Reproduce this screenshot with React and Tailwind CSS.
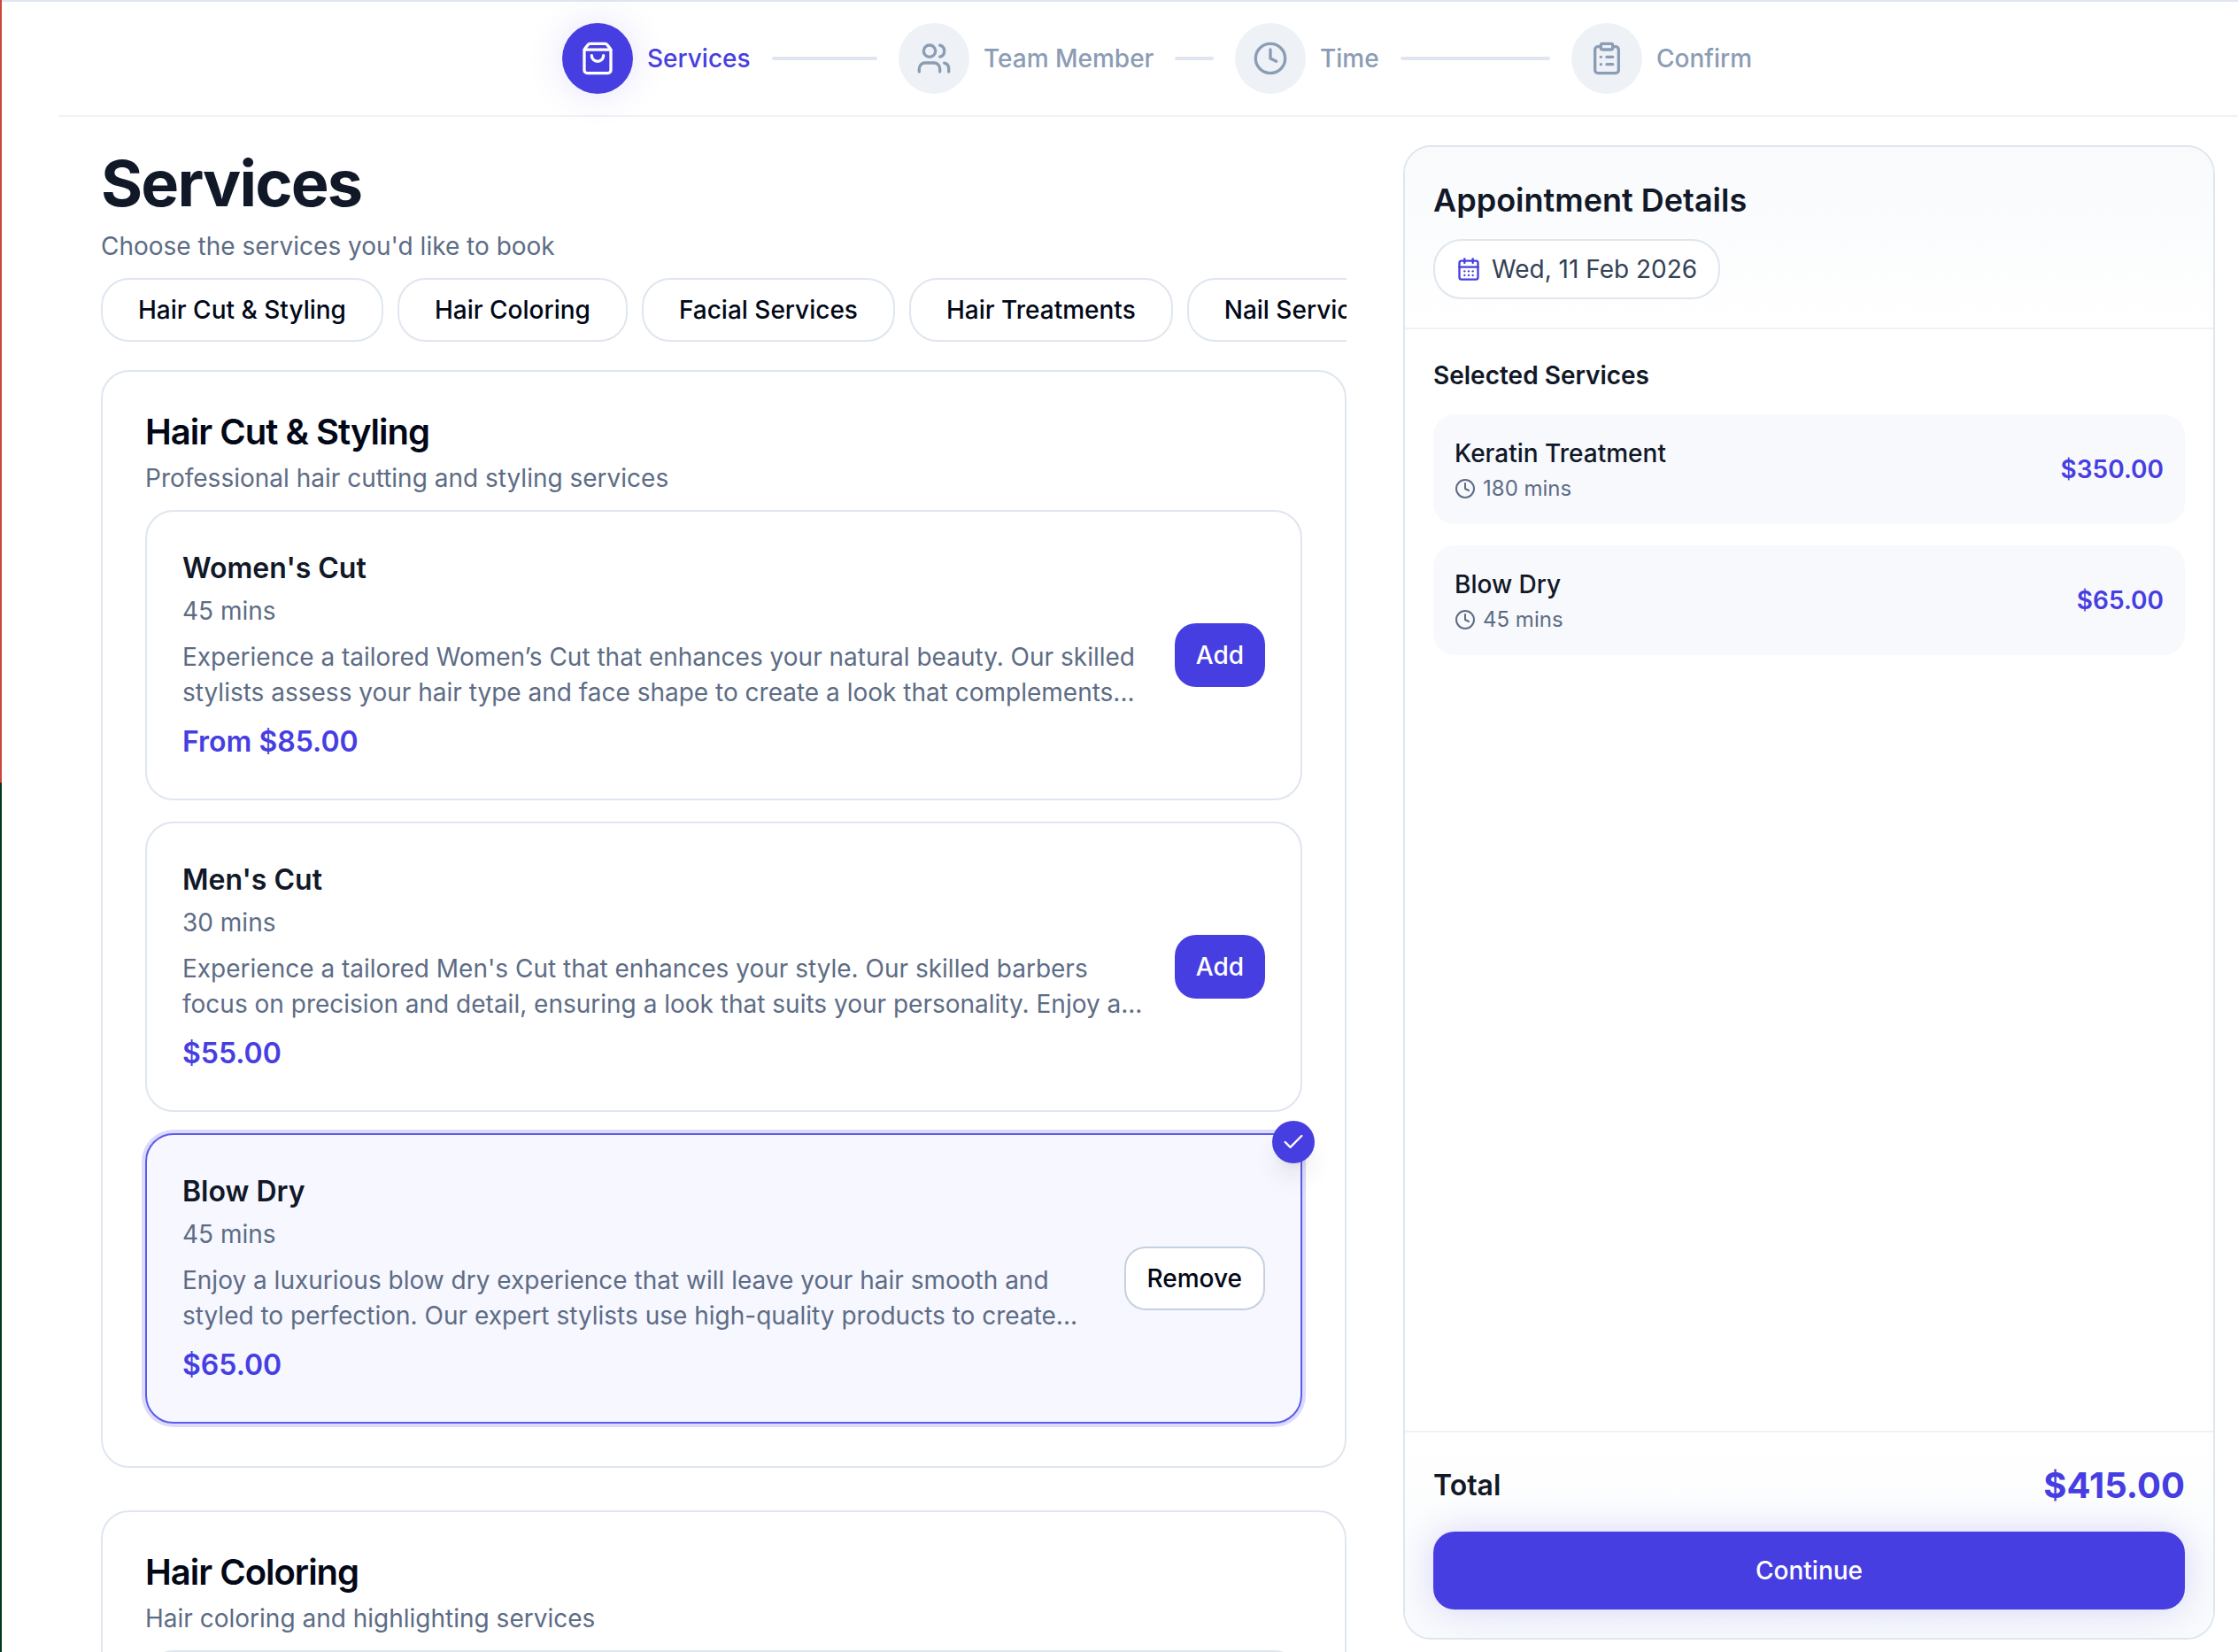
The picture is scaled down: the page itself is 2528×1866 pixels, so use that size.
import React, { useState } from "react";
import {
  CalendarDays,
  Check,
  ClipboardList,
  Clock,
  ShoppingBag,
  Users,
} from "lucide-react";

// Booking steps
const steps = [
  { id: "services", label: "Services", icon: ShoppingBag },
  { id: "team", label: "Team Member", icon: Users },
  { id: "time", label: "Time", icon: Clock },
  { id: "confirm", label: "Confirm", icon: ClipboardList },
];

const tabs = [
  "Hair Cut & Styling",
  "Hair Coloring",
  "Facial Services",
  "Hair Treatments",
  "Nail Services",
];

// Service catalog
const categories = [
  {
    id: 1,
    name: "Hair Cut & Styling",
    description: "Professional hair cutting and styling services",
    services: [
      {
        id: 11,
        name: "Women's Cut",
        duration: 45,
        price: "From $85.00",
        amount: 85,
        description:
          "Experience a tailored Women’s Cut that enhances your natural beauty. Our skilled stylists assess your hair type and face shape to create a look that complements...",
      },
      {
        id: 12,
        name: "Men's Cut",
        duration: 30,
        price: "$55.00",
        amount: 55,
        description:
          "Experience a tailored Men's Cut that enhances your style. Our skilled barbers focus on precision and detail, ensuring a look that suits your personality. Enjoy a...",
      },
      {
        id: 13,
        name: "Blow Dry",
        duration: 45,
        price: "$65.00",
        amount: 65,
        description:
          "Enjoy a luxurious blow dry experience that will leave your hair smooth and styled to perfection. Our expert stylists use high-quality products to create...",
      },
    ],
  },
  {
    id: 2,
    name: "Hair Coloring",
    description: "Hair coloring and highlighting services",
    services: [
      {
        id: 21,
        name: "Full Color",
        duration: 120,
        price: "From $140.00",
        amount: 140,
        description: "All-over color matched to your skin tone.",
      },
    ],
  },
];

function Stepper({ current }) {
  return (
    <header className="ml-16 shrink-0 border-b-2 border-[#eef2f7]">
      <ol className="flex justify-center py-6 pl-5">
        {steps.map((step, index) => {
          const Icon = step.icon;
          const active = step.id === current;
          const last = index === steps.length - 1;
          return (
            <li
              key={step.id}
              className={`flex items-center ${last ? "" : "w-[380px]"}`}
            >
              <span
                className={`flex size-20 shrink-0 items-center justify-center rounded-full ${
                  active
                    ? "bg-[#473ee2] text-white shadow-[0_0_40px_rgba(71,62,226,0.15)]"
                    : "bg-[#eef2f7] text-[#8b9cb5]"
                }`}
              >
                <Icon className="size-10" />
              </span>
              <span
                className={`ml-4 text-[28px] leading-10 font-medium whitespace-nowrap ${
                  active ? "text-[#473ee2]" : "text-[#8b9cb5]"
                }`}
              >
                {step.label}
              </span>
              {!last && (
                <span className="mx-6 h-1 flex-1 rounded-full bg-[#dfe6ef]" />
              )}
            </li>
          );
        })}
      </ol>
    </header>
  );
}

function ServiceCard({ service, selected, onToggle }) {
  return (
    <article
      className={`relative flex items-center gap-8 rounded-[32px] border-2 p-10 ${
        selected
          ? "border-[#5b5cec] bg-[#f6f7ff] ring-4 ring-[#dddafb]"
          : "border-[#dfe6ef] bg-white"
      }`}
    >
      {selected && (
        <span className="absolute -top-4 -right-4 flex size-12 items-center justify-center rounded-full bg-[#473ee2] text-white shadow-[0_20px_30px_-6px_rgba(0,0,0,0.1),0_8px_12px_-8px_rgba(0,0,0,0.1)]">
          <Check className="size-7" />
        </span>
      )}

      <div className="min-w-0 flex-1">
        <h3 className="text-[32px] leading-12 font-semibold text-[#111827]">
          {service.name}
        </h3>
        <p className="mt-1 text-[28px] leading-10 text-[#5d6c85]">
          {service.duration} mins
        </p>
        <p className="mt-3 line-clamp-2 text-[28px] leading-10 text-[#5d6c85]">
          {service.description}
        </p>
        <p className="mt-3 text-[32px] leading-12 font-semibold text-[#473ee2]">
          {service.price}
        </p>
      </div>

      {selected ? (
        <button
          type="button"
          onClick={onToggle}
          className="h-[72px] shrink-0 rounded-3xl border-2 border-[#c5d1e0] bg-white px-6 text-[28px] font-medium text-[#020817]"
        >
          Remove
        </button>
      ) : (
        <button
          type="button"
          onClick={onToggle}
          className="h-[72px] shrink-0 rounded-3xl bg-[#473ee2] px-6 text-[28px] font-medium text-white"
        >
          Add
        </button>
      )}
    </article>
  );
}

function AppointmentDetails({ items }) {
  const total = items.reduce((sum, item) => sum + item.amount, 0);

  return (
    <aside className="flex w-[38.4%] shrink-0 flex-col overflow-hidden rounded-[32px] border-2 border-[#dfe6ef] bg-white">
      <div className="border-b-2 border-[#eef2f7] bg-linear-to-b from-[#f8fafc] to-white p-8">
        <h2 className="text-4xl leading-14 font-semibold text-[#111827]">
          Appointment Details
        </h2>
        <div className="mt-4 inline-flex items-center gap-3 rounded-[32px] border-2 border-[#dfe6ef] bg-white px-6 py-3 align-top text-[28px] leading-10 text-[#334155]">
          <CalendarDays className="size-7 text-[#473ee2]" />
          Wed, 11 Feb 2026
        </div>
      </div>

      <div className="flex-1 p-8">
        <h3 className="text-[28px] leading-10 font-semibold text-[#111827]">
          Selected Services
        </h3>
        <ul className="mt-6 flex flex-col gap-6">
          {items.map((item) => (
            <li
              key={item.id}
              className="flex items-center justify-between rounded-3xl bg-[#f8f9fd] p-6"
            >
              <div>
                <p className="text-[28px] leading-10 font-medium text-[#111827]">
                  {item.name}
                </p>
                <p className="mt-1 flex items-center gap-2 text-2xl leading-8 text-[#5d6c85]">
                  <Clock className="size-6" />
                  {item.duration} mins
                </p>
              </div>
              <p className="text-[28px] leading-10 font-semibold text-[#473ee2]">
                ${item.amount.toFixed(2)}
              </p>
            </li>
          ))}
        </ul>
      </div>

      <div className="border-t-2 border-[#eef2f7] bg-linear-to-t from-[#f8fafc] to-white p-8">
        <div className="flex items-center justify-between">
          <span className="text-[32px] leading-12 font-semibold text-[#111827]">
            Total
          </span>
          <span className="text-[40px] leading-14 font-bold text-[#473ee2]">
            ${total.toFixed(2)}
          </span>
        </div>
        <button
          type="button"
          className="mt-6 h-22 w-full rounded-3xl bg-[#473ee2] text-[28px] font-medium text-white shadow-[0_0_40px_rgba(71,62,226,0.2)]"
        >
          Continue
        </button>
      </div>
    </aside>
  );
}

export default function App() {
  const [selected, setSelected] = useState([
    { id: 41, name: "Keratin Treatment", duration: 180, amount: 350 },
    categories[0].services[2],
  ]);

  const isSelected = (service) => selected.some((s) => s.id === service.id);

  const toggle = (service) => {
    setSelected((prev) =>
      prev.some((s) => s.id === service.id)
        ? prev.filter((s) => s.id !== service.id)
        : [...prev, service]
    );
  };

  return (
    <div className="flex h-dvh overflow-hidden bg-white font-[Inter,sans-serif]">
      {/* Window edge */}
      <div aria-hidden className="flex w-0.5 shrink-0 flex-col">
        <div className="h-[884px] bg-[#cf453b]" />
        <div className="flex-1 bg-[#003a1e]" />
      </div>

      <div className="flex min-w-0 flex-1 flex-col border-t-2 border-[#dfe6ef]">
        <Stepper current="services" />

        <div className="flex min-h-0 flex-1 gap-16 pt-8 pr-[26px] pb-3.5 pl-28">
          {/* Service list */}
          <main className="-mb-3.5 min-w-0 flex-1 overflow-y-auto [scrollbar-width:none]">
            <h1 className="text-7xl leading-[86px] font-bold tracking-tight text-[#111827]">
              Services
            </h1>
            <p className="mt-2 text-[28px] leading-10 text-[#5d6c85]">
              Choose the services you'd like to book
            </p>

            <nav className="mt-4 flex gap-4 overflow-x-auto [scrollbar-width:none]">
              {tabs.map((tab) => (
                <button
                  key={tab}
                  type="button"
                  className="h-[72px] shrink-0 rounded-[32px] border-2 border-[#dfe6ef] bg-white px-10 text-[28px] font-medium text-[#020817]"
                >
                  {tab}
                </button>
              ))}
            </nav>

            <div className="mt-8 flex flex-col gap-12">
              {categories.map((category) => (
                <section
                  key={category.id}
                  className="rounded-[32px] border-2 border-[#dfe6ef] p-12"
                >
                  <h2 className="text-[40px] leading-10 font-semibold tracking-tight text-[#020817]">
                    {category.name}
                  </h2>
                  <p className="mt-3 text-[28px] leading-10 text-[#5d6c85]">
                    {category.description}
                  </p>
                  <div className="mt-4 flex flex-col gap-6">
                    {category.services.map((service) => (
                      <ServiceCard
                        key={service.id}
                        service={service}
                        selected={isSelected(service)}
                        onToggle={() => toggle(service)}
                      />
                    ))}
                  </div>
                </section>
              ))}
            </div>
          </main>

          <AppointmentDetails items={selected} />
        </div>
      </div>
    </div>
  );
}
